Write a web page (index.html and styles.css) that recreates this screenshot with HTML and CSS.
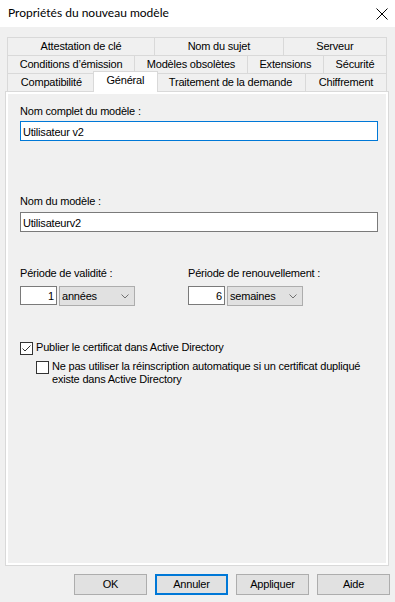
FILE: index.html
```html
<!DOCTYPE html>
<html lang="fr">
<head>
  <meta charset="UTF-8" />
  <meta name="viewport" content="width=device-width, initial-scale=1.0" />
  <title>Propriétés du nouveau modèle</title>
  <link rel="stylesheet" href="styles.css">
</head>
<body>
  <div class="titlebar">
    <span class="title">Propriétés du nouveau modèle</span>
    <svg class="close" width="12" height="12" viewBox="0 0 12 12">
      <path d="M0.5 0.5 L11.5 11.5 M11.5 0.5 L0.5 11.5" stroke="#000" stroke-width="1" fill="none"/>
    </svg>
  </div>

  <div class="dialog">
    <div class="tabs">
      <div class="tab-row">
        <div class="tab">Attestation de clé</div>
        <div class="tab">Nom du sujet</div>
        <div class="tab">Serveur</div>
      </div>
      <div class="tab-row">
        <div class="tab">Conditions d’émission</div>
        <div class="tab">Modèles obsolètes</div>
        <div class="tab">Extensions</div>
        <div class="tab">Sécurité</div>
      </div>
      <div class="tab-row">
        <div class="tab">Compatibilité</div>
        <div class="tab active">Général</div>
        <div class="tab">Traitement de la demande</div>
        <div class="tab">Chiffrement</div>
      </div>
    </div>

    <div class="panel">
      <div class="page">
        <div class="field-label">Nom complet du modèle :</div>
        <div class="textbox focused">Utilisateur v2</div>

        <div class="field-label second">Nom du modèle :</div>
        <div class="textbox">Utilisateurv2</div>

        <div class="periods">
          <div class="period">
            <div class="field-label">Période de validité :</div>
            <div class="period-inputs">
              <div class="numbox">1</div>
              <div class="combo">
                <span>années</span>
                <svg width="8" height="5" viewBox="0 0 8 5"><path d="M0.5 0.5 L4 4 L7.5 0.5" stroke="#707070" fill="none"/></svg>
              </div>
            </div>
          </div>
          <div class="period">
            <div class="field-label">Période de renouvellement :</div>
            <div class="period-inputs">
              <div class="numbox">6</div>
              <div class="combo">
                <span>semaines</span>
                <svg width="8" height="5" viewBox="0 0 8 5"><path d="M0.5 0.5 L4 4 L7.5 0.5" stroke="#707070" fill="none"/></svg>
              </div>
            </div>
          </div>
        </div>

        <div class="check">
          <span class="box">
            <svg width="11" height="11" viewBox="0 0 11 11"><path d="M1.5 5.5 L4 8 L9.5 2.5" stroke="#333" fill="none"/></svg>
          </span>
          <span>Publier le certificat dans Active Directory</span>
        </div>
        <div class="check sub">
          <span class="box"></span>
          <span>Ne pas utiliser la réinscription automatique si un certificat dupliqué<br>existe dans Active Directory</span>
        </div>
      </div>
    </div>

    <div class="buttons">
      <button class="btn">OK</button>
      <button class="btn default">Annuler</button>
      <button class="btn">Appliquer</button>
      <button class="btn">Aide</button>
    </div>
  </div>
</body>
</html>
```

FILE: styles.css
```css
body {
  margin: 0;
  background: #f0f0f0;
  color: #000;
  font-family: 'Liberation Sans', Arial, sans-serif;
  font-size: 11px;
  letter-spacing: -0.2px;
}

/* Title bar */
.titlebar {
  height: 27px;
  background: #fff;
  display: flex;
  justify-content: space-between;
  align-items: flex-start;
  padding: 0 7px 0 8px;
}

.title {
  font-family: Lato, sans-serif;
  font-size: 12px;
  line-height: 16px;
  letter-spacing: 0;
  margin-top: 5px;
}

.close {
  margin-top: 8px;
}

.dialog {
  padding: 10px 6px 0 5px;
}

/* Tabs */
.tabs {
  margin: 0 2px;
}

.tab-row {
  display: flex;
  align-items: flex-start;
  height: 18px;
}

.tab {
  flex: 1 1 auto;
  height: 17px;
  line-height: 17px;
  padding: 0 4px;
  border: 1px solid #d9d9d9;
  border-bottom: none;
  margin-left: -1px;
  text-align: center;
  white-space: nowrap;
  background: #f0f0f0;
}

.tab:first-child {
  margin-left: 0;
}

/* selected tab grows over its neighbours, like the native control */
.tab.active {
  background: #fff;
  margin: -2px -2px 0 -3px;
  height: 20px;
  position: relative;
  z-index: 1;
}

/* Panel */
.panel {
  height: 475px;
  box-sizing: border-box;
  border: 1px solid #d9d9d9;
  padding: 2px;
  background: #fff;
}

.page {
  height: 100%;
  box-sizing: border-box;
  background: #f0f0f0;
  padding: 11px 0 0 12px;
}

.field-label {
  line-height: 13px;
  white-space: nowrap;
}

.field-label.second {
  margin-top: 54px;
}

.textbox {
  width: 358px;
  height: 20px;
  box-sizing: border-box;
  margin-top: 3px;
  padding: 1px 2px 0;
  line-height: 18px;
  border: 1px solid #7a7a7a;
  background: #fff;
}

.field-label.second + .textbox {
  margin-top: 4px;
}

.textbox.focused {
  border-color: #0078d7;
}

.periods {
  display: flex;
  margin-top: 35px;
}

.period {
  width: 168px;
}

.period-inputs {
  display: flex;
  align-items: flex-start;
  margin-top: 6px;
}

.numbox {
  width: 37px;
  height: 19px;
  box-sizing: border-box;
  padding: 1px 2px 0;
  line-height: 17px;
  text-align: right;
  border: 1px solid #7a7a7a;
  background: #fff;
}

.combo {
  width: 76px;
  height: 20px;
  box-sizing: border-box;
  margin-left: 2px;
  padding: 1px 5px 0 2px;
  line-height: 17px;
  display: flex;
  justify-content: space-between;
  align-items: center;
  border: 1px solid #adadad;
  background: #e1e1e1;
}

.combo svg {
  margin-top: -1px;
}

/* Checkboxes */
.check {
  display: flex;
  align-items: flex-start;
  line-height: 13px;
  margin-top: 35px;
}

.check.sub {
  margin-top: 5px;
  padding-left: 16px;
}

.box {
  width: 13px;
  height: 13px;
  box-sizing: border-box;
  flex: none;
  margin: 1px 3px 0 0;
  border: 1px solid #333;
  background: #fff;
  display: flex;
}

/* Buttons */
.buttons {
  display: flex;
  justify-content: flex-end;
  gap: 8px;
  margin: 8px -1px 0 0;
}

.btn {
  width: 73px;
  height: 21px;
  box-sizing: border-box;
  padding: 0;
  border: 1px solid #adadad;
  background: #e1e1e1;
  color: #000;
  font-family: 'Liberation Sans', Arial, sans-serif;
  font-size: 11px;
  letter-spacing: -0.2px;
  line-height: 19px;
}

.btn.default {
  border: 2px solid #0078d7;
  line-height: 17px;
}
```
